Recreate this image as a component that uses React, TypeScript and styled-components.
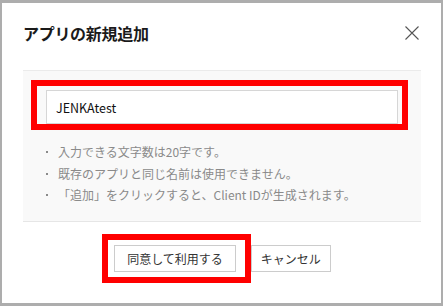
import React from 'react';
import styled, { createGlobalStyle } from 'styled-components';

const GlobalStyle = createGlobalStyle`
  html, body {
    margin: 0;
    padding: 0;
    background: #adadad;
  }
  body {
    font-family: 'Noto Sans CJK JP', 'Noto Sans', sans-serif;
  }
`;

const Dialog = styled.div`
  box-sizing: border-box;
  width: 443px;
  height: 306px;
  border-style: solid;
  border-color: #adadad;
  border-width: 3px 2px 3px 2px;
  background: #ffffff;
  padding: 18px 20px 0 21px;
  display: flex;
  flex-direction: column;
`;

const Header = styled.div`
  display: flex;
  align-items: center;
  justify-content: space-between;
  height: 24px;
  padding-right: 2px;
`;

const Title = styled.h2`
  margin: 0;
  font-size: 16px;
  font-weight: bold;
  color: #1a1a1a;
  line-height: 24px;
  letter-spacing: -0.3px;
`;

const CloseButton = styled.button`
  border: none;
  background: none;
  padding: 0;
  width: 14px;
  height: 14px;
  display: flex;
  cursor: pointer;
`;

const Body = styled.div`
  margin-top: 25px;
  background: #f9f9f9;
  border-top: 1px solid #ebebeb;
  border-bottom: 1px solid #e6e6e6;
  padding: 19px 23px 15px 23px;
`;

const Highlight = styled.div<{ $top: number; $right: number; $bottom: number; $left: number }>`
  position: relative;
  &::after {
    content: '';
    position: absolute;
    top: ${(p) => -p.$top}px;
    right: ${(p) => -p.$right}px;
    bottom: ${(p) => -p.$bottom}px;
    left: ${(p) => -p.$left}px;
    border: 6px solid #ff0000;
    pointer-events: none;
  }
`;

const NameInput = styled.input`
  box-sizing: border-box;
  display: block;
  width: 100%;
  height: 34px;
  border: 1px solid #d6d6d6;
  background: #ffffff;
  padding: 0 9px;
  font-family: 'Noto Sans CJK JP', sans-serif;
  font-size: 12.5px;
  color: #111;
  outline: none;
`;

const Notes = styled.ul`
  list-style: none;
  margin: 17px 0 0 0;
  padding: 0;
`;

const Note = styled.li`
  display: flex;
  align-items: center;
  font-size: 12px;
  line-height: 21.5px;
  color: #8a8a8a;
  white-space: nowrap;

  &::before {
    content: '';
    width: 2px;
    height: 2px;
    background: #8a8a8a;
    margin: 1px 10px 0 0;
    flex-shrink: 0;
  }
`;

const Footer = styled.div`
  display: flex;
  justify-content: center;
  gap: 15px;
  margin-top: 23px;
  padding-left: 1px;
`;

const Button = styled.button<{ $pad: number }>`
  box-sizing: border-box;
  height: 27px;
  padding: 0 ${(p) => p.$pad}px;
  border: 1px solid #cccccc;
  background: #ffffff;
  font-family: 'Noto Sans CJK JP', sans-serif;
  font-size: 12px;
  color: #333333;
  cursor: pointer;
`;

const CloseIcon = () => (
  <svg width="14" height="14" viewBox="0 0 14 14">
    <path d="M0.5 0.5 L13.5 13.5 M13.5 0.5 L0.5 13.5" stroke="#555" strokeWidth="1.1" fill="none" />
  </svg>
);

const App = () => {
  return (
    <>
      <GlobalStyle />
      <Dialog>
        <Header>
          <Title>アプリの新規追加</Title>
          <CloseButton aria-label="閉じる">
            <CloseIcon />
          </CloseButton>
        </Header>
        <Body>
          <Highlight $top={10} $right={10} $bottom={6} $left={15}>
            <NameInput defaultValue="JENKAtest" />
          </Highlight>
          <Notes>
            <Note>入力できる文字数は20字です。</Note>
            <Note>既存のアプリと同じ名前は使用できません。</Note>
            <Note>「追加」をクリックすると、Client IDが生成されます。</Note>
          </Notes>
        </Body>
        <Footer>
          <Highlight $top={11} $right={15} $bottom={11} $left={12}>
            <Button $pad={12}>同意して利用する</Button>
          </Highlight>
          <Button $pad={9}>キャンセル</Button>
        </Footer>
      </Dialog>
    </>
  );
};

export default App;
